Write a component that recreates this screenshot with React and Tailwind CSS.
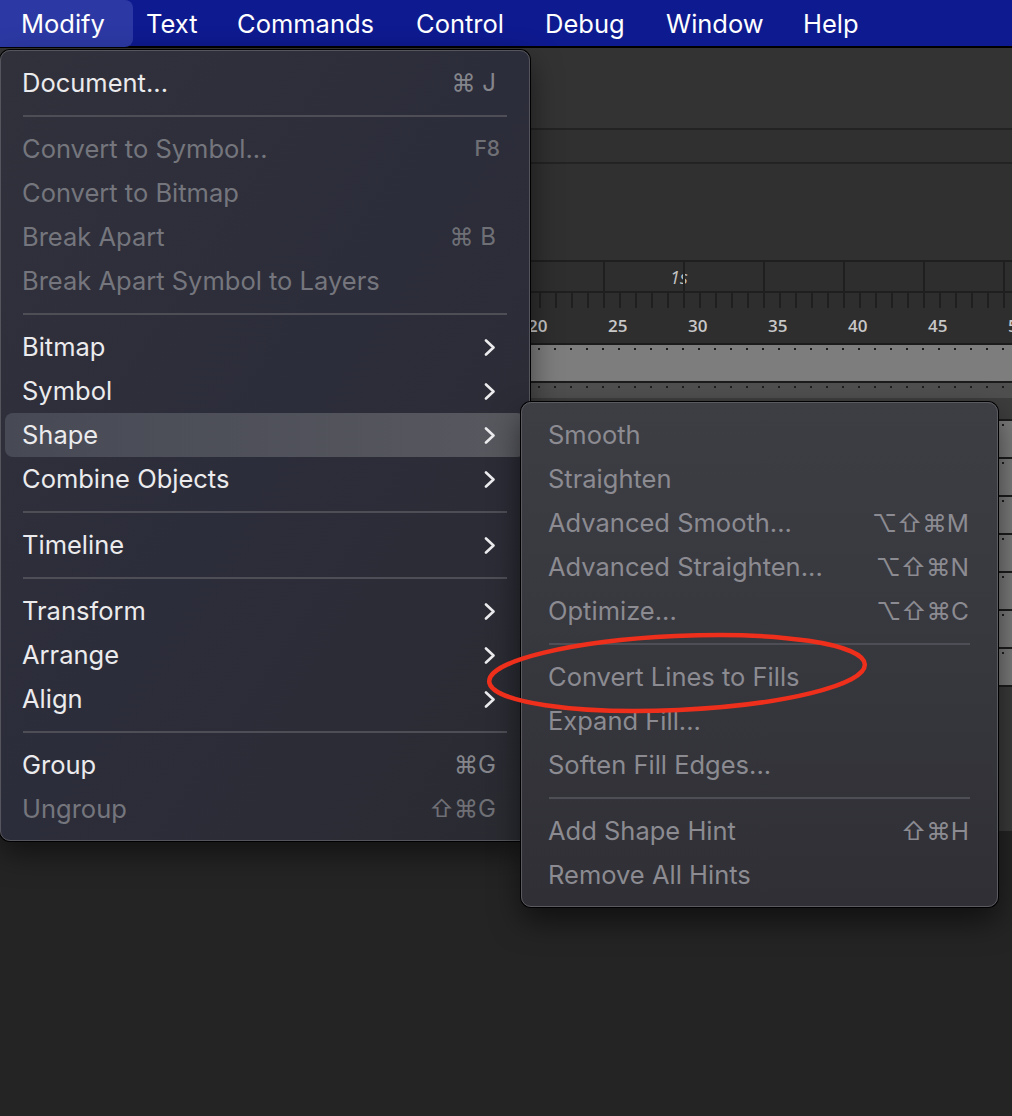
import React from "react";

const FONT = "font-['Inter','DejaVu_Sans',sans-serif]";

const mainItems = [
  { label: "Document...", sc: "⌘ J" },
  "sep",
  { label: "Convert to Symbol...", sc: "F8", dis: true, small: true },
  { label: "Convert to Bitmap", dis: true },
  { label: "Break Apart", sc: "⌘ B", dis: true },
  { label: "Break Apart Symbol to Layers", dis: true },
  "sep",
  { label: "Bitmap", arrow: true },
  { label: "Symbol", arrow: true },
  { label: "Shape", arrow: true, active: true },
  { label: "Combine Objects", arrow: true },
  "sep",
  { label: "Timeline", arrow: true },
  "sep",
  { label: "Transform", arrow: true },
  { label: "Arrange", arrow: true },
  { label: "Align", arrow: true },
  "sep",
  { label: "Group", sc: "⌘G" },
  { label: "Ungroup", sc: "⇧⌘G", dis: true },
];

const shapeItems = [
  { label: "Smooth" },
  { label: "Straighten" },
  { label: "Advanced Smooth...", sc: "⌥⇧⌘M" },
  { label: "Advanced Straighten...", sc: "⌥⇧⌘N" },
  { label: "Optimize...", sc: "⌥⇧⌘C" },
  "sep",
  { label: "Convert Lines to Fills" },
  { label: "Expand Fill..." },
  { label: "Soften Fill Edges..." },
  "sep",
  { label: "Add Shape Hint", sc: "⇧⌘H" },
  { label: "Remove All Hints" },
];

const Chevron = () => (
  <svg width="12" height="17" viewBox="0 0 12 17" fill="none">
    <path
      d="M2 1.5 L9.5 8.5 L2 15.5"
      stroke="#ececee"
      strokeWidth="2.6"
      strokeLinecap="round"
      strokeLinejoin="round"
    />
  </svg>
);

function MainRow({ item }) {
  return (
    <div
      className={`flex h-[44px] items-center justify-between rounded-[8px] pl-[17px] pr-[29px] ${
        item.active ? "bg-linear-to-r from-[#474955] to-[#58595f]" : ""
      }`}>
      <span className={`text-[25.5px] ${item.dis ? "text-[#75767d]" : "text-[#ebebed]"}`}>
        {item.label}
      </span>
      {item.arrow && <Chevron />}
      {item.sc && (
        <span
          className={`${item.small ? "-mr-[4px] text-[21px] font-medium" : "text-[24px]"} ${
            item.dis ? "text-[#6f7076]" : "text-[#85868c]"
          }`}>
          {item.sc}
        </span>
      )}
    </div>
  );
}

function SubRow({ item }) {
  return (
    <div className="flex h-[44px] items-center justify-between pl-[22px] pr-[24px]">
      <span className="text-[25.5px] text-[#8b8b91]">{item.label}</span>
      {item.sc && <span className="text-[24.5px] text-[#8b8b91]">{item.sc}</span>}
    </div>
  );
}

const Sep = ({ inset }) => (
  <div className={`flex h-[22px] items-center ${inset}`}>
    <div className="h-[2px] w-full bg-[#4e4f56]" />
  </div>
);

const cells16 = Array.from({ length: 32 }, (_, i) => i);
const cells80 = Array.from({ length: 7 }, (_, i) => i);

function DotRow({ className }) {
  return (
    <div className={`flex pl-[521px] ${className}`}>
      {cells16.map((i) => (
        <div key={i} className="w-4 shrink-0 pt-[3px] pl-[1px]">
          <div className="h-[2px] w-[2px] bg-[#1e1e1e]" />
        </div>
      ))}
    </div>
  );
}

export default function App() {
  return (
    <div className={`relative h-[1116px] w-[1012px] overflow-hidden bg-[#242424] ${FONT}`}>
      {/* Menu bar */}
      <div className="flex h-[48px] items-center border-b-2 border-black bg-[#0e1a8f] text-[25.5px] text-white">
        <div className="flex h-[47px] w-[133px] items-center rounded-r-[8px] bg-[#2c39a4] pl-[21px] pt-[3px]">
          Modify
        </div>
        <div className="flex pt-[3px]">
          <div className="ml-[13px] w-[91px]">Text</div>
          <div className="w-[179px]">Commands</div>
          <div className="w-[129px]">Control</div>
          <div className="w-[121px]">Debug</div>
          <div className="w-[137px]">Window</div>
          <div>Help</div>
        </div>
      </div>

      {/* Background: stage + timeline */}
      <div className="flex flex-col">
        <div className="h-[80px] bg-[#333333]" />
        <div className="h-[34px] border-t-2 border-[#232323] bg-[#303030]" />
        <div className="h-[98px] border-t-2 border-[#232323] bg-[#303030]" />

        {/* ruler */}
        <div className="flex h-[31px] border-t-2 border-[#1f1f1f] bg-[#2e2e2e] pl-[523px]">
          {cells80.map((i) => (
            <div key={i} className="w-[80px] shrink-0 border-l-2 border-[#1f1f1f]">
              {i === 1 && (
                <span className="ml-[65px] mt-[2px] block text-[18px] italic text-[#c4c4c4] font-['Open_Sans',sans-serif]">
                  1s
                </span>
              )}
            </div>
          ))}
        </div>
        <div className="flex h-[17px] border-t-2 border-[#1f1f1f] bg-[#2e2e2e] pl-[523px]">
          {cells16.map((i) => (
            <div key={i} className="w-4 shrink-0 border-l-2 border-[#1f1f1f]" />
          ))}
        </div>
        <div className="flex h-[35px] items-center overflow-hidden bg-[#2e2e2e] pl-[523px] font-['Open_Sans',sans-serif] text-[17px] font-semibold text-[#c8c8c8]">
          {cells80.map((i) => (
            <div key={i} className="w-[80px] shrink-0 whitespace-nowrap pl-[5px]">
              {20 + i * 5}
            </div>
          ))}
        </div>
        <DotRow className="h-[38px] border-t-2 border-[#1c1c1c] bg-[#7d7d7d]" />
        <DotRow className="h-[17px] border-t-2 border-[#1c1c1c] bg-[#4f4f4f]" />
        <div className="h-[21px] bg-[#3d3d3d]" />
        {[0, 1, 2, 3, 4, 5, 6].map((i) => (
          <DotRow key={i} className="h-[38px] border-t-2 border-[#1c1c1c] bg-[#7a7a7a]" />
        ))}
        <div className="h-[146px] border-t-2 border-[#1c1c1c] bg-[#3a3a3a]" />
        <div className="flex-1 bg-[#262626]" />
      </div>

      {/* Modify menu */}
      <div className="absolute left-0 top-[50px] w-[530px] rounded-[10px] border border-[#55565d] bg-linear-to-br from-[#30313b] via-[#2c2d3a] to-[#2a2b31] px-[4px] pb-[9px] pt-[10px] shadow-[0_0_0_1px_#000,0_12px_30px_rgba(0,0,0,0.5)]">
        {mainItems.map((item, i) =>
          item === "sep" ? (
            <Sep key={i} inset="px-[18px]" />
          ) : (
            <MainRow key={i} item={item} />
          )
        )}
      </div>

      {/* Shape submenu */}
      <div className="absolute left-[521px] top-[402px] w-[477px] rounded-[10px] border border-[#5a5a61] bg-linear-to-b from-[#3d3d44] via-[#37373e] to-[#2f2f35] px-[4px] pb-[9px] pt-[10px] shadow-[0_0_0_1px_#000,0_14px_30px_rgba(0,0,0,0.55)]">
        {shapeItems.map((item, i) =>
          item === "sep" ? (
            <Sep key={i} inset="px-[23px]" />
          ) : (
            <SubRow key={i} item={item} />
          )
        )}
      </div>

      {/* Red annotation ellipse */}
      <svg
        className="pointer-events-none absolute left-0 top-0"
        width="1012"
        height="1116"
        viewBox="0 0 1012 1116">
        <ellipse
          cx="677"
          cy="673"
          rx="188"
          ry="37"
          transform="rotate(-2.6 677 673)"
          fill="none"
          stroke="#ee2f1b"
          strokeWidth="4.5"
        />
      </svg>
    </div>
  );
}
